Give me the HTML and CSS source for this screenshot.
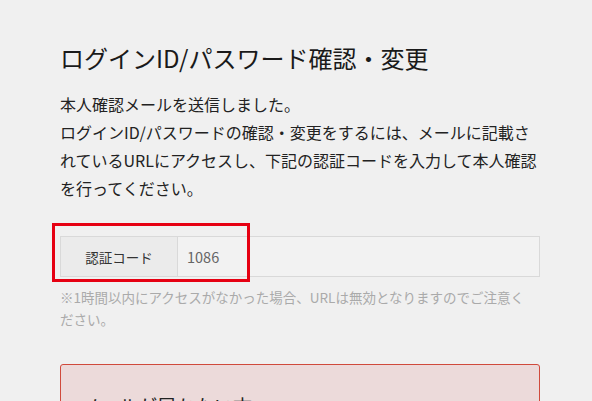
FILE: index.html
```html
<!DOCTYPE html>
<html lang="ja">
  <head>
    <meta charset="utf-8">
    <title>ログインID/パスワード確認・変更</title>
    <link rel="stylesheet" href="styles.css">
  </head>
  <body>
    <main class="page">
      <h1 class="title">ログインID/パスワード確認・変更</h1>

      <p class="lead">本人確認メールを送信しました。<br>ログインID/パスワードの確認・変更をするには、メールに記載さ<br>れているURLにアクセスし、下記の認証コードを入力して本人確認<br>を行ってください。</p>

      <div class="codeBox">
        <div class="codeRow">
          <div class="codeLabel">認証コード</div>
          <div class="codeValue">1086</div>
        </div>
        <div class="mark"></div>
      </div>

      <p class="note">※1時間以内にアクセスがなかった場合、URLは無効となりますのでご注意ください。</p>

      <section class="alert">
        <h2 class="alertTitle">メールが届かない方</h2>
      </section>
    </main>
  </body>
</html>
```

FILE: styles.css
```css
html {
  font-family: "Noto Sans CJK JP", "Noto Sans", sans-serif;
}

body {
  margin: 0;
  background-color: #f0f0f0;
  color: #222;
}

.page {
  width: 480px;
  margin-left: 60px;
  padding-top: 40px;
}

.title {
  margin: 0;
  font-size: 24px;
  font-weight: normal;
  line-height: 36px;
  color: #1a1a1a;
}

.lead {
  margin: 14px 0 0;
  font-size: 16px;
  line-height: 28px;
  white-space: nowrap;
  color: #222;
}

.codeBox {
  position: relative;
  margin-top: 34px;
}

.codeRow {
  display: flex;
  border: 1px solid #d9d9d9;
  height: 39px;
}

.codeLabel {
  width: 116px;
  display: flex;
  justify-content: center;
  align-items: center;
  background-color: #ebebeb;
  border-right: 1px solid #d9d9d9;
  font-size: 13.5px;
  color: #333;
}

.codeValue {
  flex: 1;
  display: flex;
  align-items: center;
  padding-left: 9px;
  background-color: #f2f2f2;
  font-size: 14.5px;
  color: #666;
}

/* 赤枠の注記 */
.mark {
  position: absolute;
  left: -8px;
  top: -13px;
  width: 192px;
  height: 53px;
  border: 3px solid #e60012;
}

.note {
  margin: 9px 0 0;
  padding-right: 10px;
  font-size: 13.5px;
  line-height: 22px;
  color: #aaa;
}

.alert {
  margin-top: 34px;
  height: 120px;
  border: 1px solid #d04a3c;
  border-radius: 3px;
  background-color: #ecdada;
  padding: 27px 20px;
}

.alertTitle {
  margin: 0;
  font-size: 19px;
  font-weight: normal;
  color: #222;
}
```
